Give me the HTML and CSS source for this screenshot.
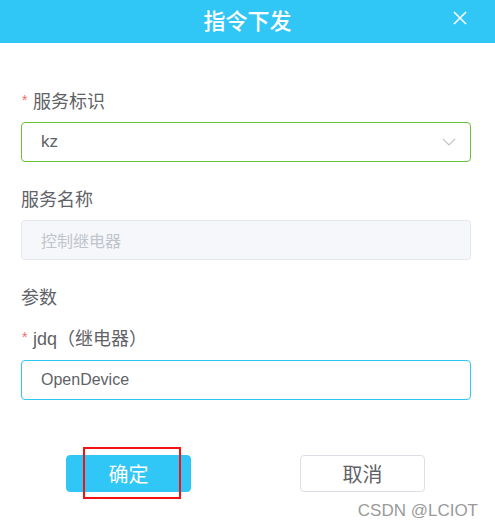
FILE: index.html
```html
<!DOCTYPE html>
<html lang="zh-CN">
<head>
<meta charset="utf-8">
<title>指令下发</title>
<link rel="stylesheet" href="styles.css">
</head>
<body>
<div class="dialog">
  <div class="header">
    <span class="title">指令下发</span>
    <span class="close">
      <svg width="14" height="14" viewBox="0 0 14 14"><path d="M1 1 L13 13 M13 1 L1 13" stroke="#fff" stroke-width="1.6" fill="none"/></svg>
    </span>
  </div>
  <div class="body">
    <div class="item first">
      <div class="label"><span class="req">*</span>服务标识</div>
      <div class="control select">
        <span class="value">kz</span>
        <svg class="arrow" width="14" height="8" viewBox="0 0 14 8"><path d="M1 1 L7 7 L13 1" stroke="#c0c4cc" stroke-width="1.2" fill="none"/></svg>
      </div>
    </div>
    <div class="item">
      <div class="label">服务名称</div>
      <div class="control disabled"><span class="placeholder">控制继电器</span></div>
    </div>
    <div class="item section">
      <div class="label">参数</div>
    </div>
    <div class="item param">
      <div class="label"><span class="req">*</span>jdq（继电器）</div>
      <div class="control focused"><span class="value">OpenDevice</span></div>
    </div>
    <div class="footer">
      <button class="btn primary"><span class="mark"></span>确定</button>
      <button class="btn plain">取消</button>
    </div>
    <div class="watermark">CSDN @LCIOT</div>
  </div>
</div>
</body>
</html>
```

FILE: styles.css
```css
html, body {
  margin: 0;
  padding: 0;
  background: #ffffff;
}
body {
  width: 495px;
  height: 528px;
  overflow: hidden;
  font-family: "Liberation Sans", "Noto Sans CJK SC", sans-serif;
  color: #606266;
}
.dialog {
  width: 495px;
}
.header {
  position: relative;
  height: 43px;
  background: #30c6f5;
  display: flex;
  justify-content: center;
  align-items: flex-start;
}
.title {
  font-family: "Noto Sans CJK SC", sans-serif;
  font-size: 22px;
  font-weight: 500;
  color: #ffffff;
  line-height: 38px;
}
.close {
  position: absolute;
  left: 453px;
  top: 11px;
  width: 14px;
  height: 14px;
  display: flex;
}
.body {
  padding: 0 24px 0 21px;
}
.item {
  display: flex;
  flex-direction: column;
  gap: 8px;
  margin-top: 26px;
}
.item.first {
  margin-top: 47px;
}
.item.param {
  margin-top: 17px;
  gap: 9px;
}
.label {
  font-family: "Liberation Sans", "Noto Sans CJK SC", sans-serif;
  font-size: 18px;
  line-height: 24px;
  color: #606266;
  display: flex;
  align-items: center;
}
.req {
  color: #f56c6c;
  font-size: 14px;
  width: 11px;
  margin-left: 1px;
  margin-top: -4px;
}
.control {
  box-sizing: border-box;
  height: 40px;
  border: 1px solid #dcdfe6;
  border-radius: 4px;
  display: flex;
  align-items: center;
  padding: 0 14px 0 19px;
  font-size: 16px;
}
.select {
  border-color: #67c23a;
  justify-content: space-between;
}
.value {
  color: #606266;
}
.select .value {
  font-size: 17px;
}
.disabled {
  background: #f5f7fa;
  border-color: #e4e7ed;
}
.placeholder {
  font-family: "Noto Sans CJK SC", sans-serif;
  font-size: 16px;
  color: #c0c4cc;
}
.focused {
  border-color: #30c6f5;
}
.footer {
  display: flex;
  justify-content: space-between;
  padding: 0 46px 0 45px;
  margin-top: 55px;
}
.btn {
  position: relative;
  box-sizing: border-box;
  width: 125px;
  height: 37px;
  border-radius: 4px;
  font-family: "Noto Sans CJK SC", sans-serif;
  font-size: 20px;
  line-height: 1;
  padding: 0;
  cursor: pointer;
}
.primary {
  background: #30c6f5;
  border: 1px solid #30c6f5;
  color: #ffffff;
}
.plain {
  background: #ffffff;
  border: 1px solid #dcdfe6;
  color: #606266;
}
.mark {
  position: absolute;
  left: 16px;
  top: -9px;
  width: 98px;
  height: 52px;
  box-sizing: border-box;
  border: 2px solid #f21414;
}
.watermark {
  text-align: right;
  font-size: 17px;
  color: #9a9a9a;
  line-height: 20px;
  margin-top: 9px;
  margin-right: -7px;
}
```
